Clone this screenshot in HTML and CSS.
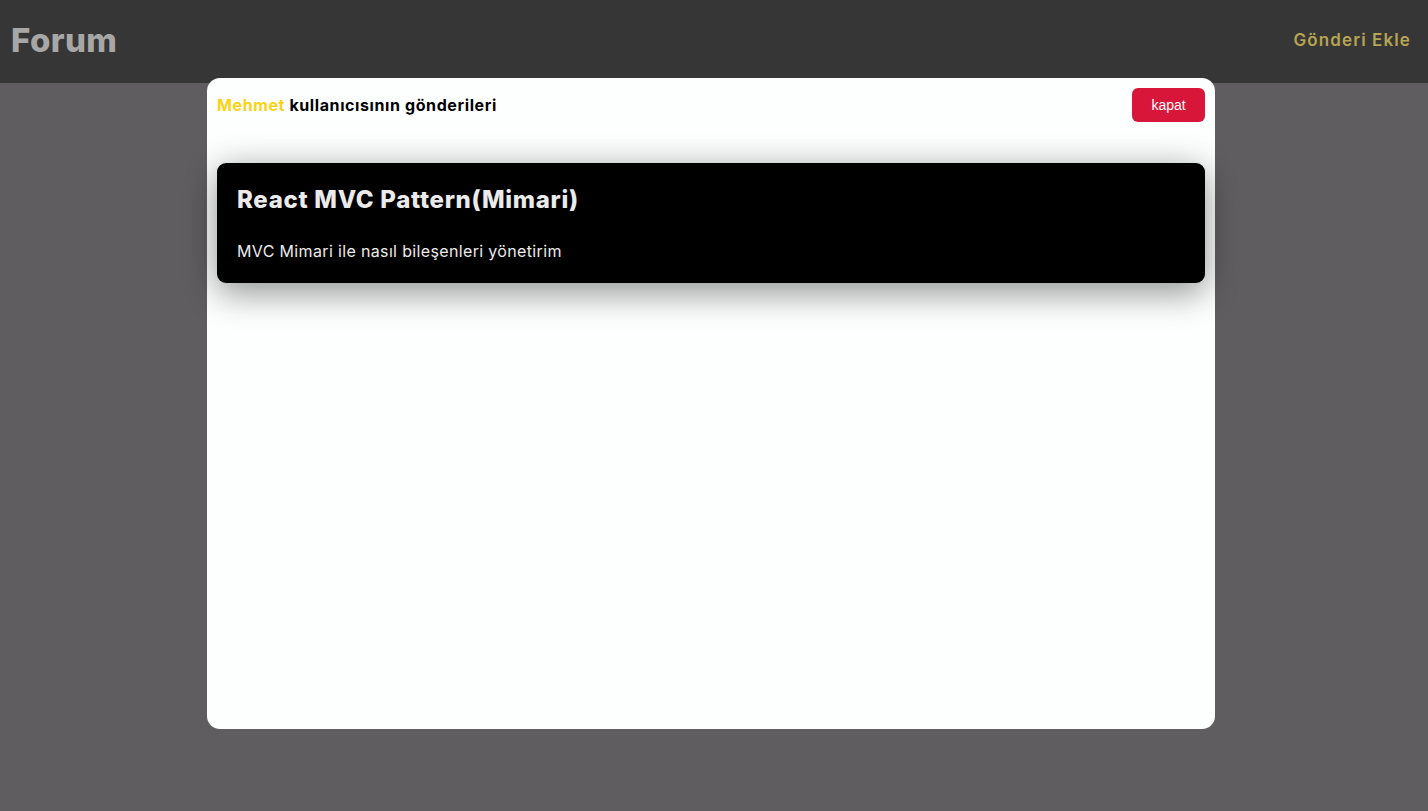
FILE: index.html
```html
<!DOCTYPE html>
<html lang="tr">
<head>
<meta charset="utf-8">
<title>Forum</title>
<link rel="stylesheet" href="styles.css">
</head>
<body>
<header class="topbar">
  <div class="brand">Forum</div>
  <a class="add-link" href="#">Gönderi Ekle</a>
</header>
<main class="page"></main>
<div class="backdrop">
  <section class="modal">
    <div class="modal-head">
      <h2 class="modal-title"><span class="user">Mehmet</span> kullanıcısının gönderileri</h2>
      <button class="close-btn">kapat</button>
    </div>
    <div class="posts">
      <article class="post">
        <h3 class="post-title">React MVC Pattern(Mimari)</h3>
        <p class="post-body">MVC Mimari ile nasıl bileşenleri yönetirim</p>
      </article>
    </div>
  </section>
</div>
</body>
</html>
```
FILE: styles.css
```css
* { box-sizing: border-box; }
html, body { margin: 0; padding: 0; }
body {
  font-family: "Inter", "Open Sans", sans-serif;
  background: #5f5d60;
  height: 811px;
  overflow: hidden;
}
.topbar {
  height: 83px;
  background: #363636;
  display: flex;
  align-items: center;
  justify-content: space-between;
  padding: 0 17px 4px 11px;
}
.brand {
  font-family: "Inter", sans-serif;
  font-weight: 800;
  font-size: 33px;
  color: #a7a7a7;
  letter-spacing: 0.4px;
}
.add-link {
  color: #b6a452;
  text-decoration: none;
  font-size: 17px;
  font-weight: 600;
  letter-spacing: 1.1px;
}
.backdrop {
  position: fixed;
  inset: 0;
  display: flex;
  justify-content: center;
  padding: 78px 6px 0 0;
}
.modal {
  width: 1008px;
  height: 651px;
  background: #fdfefe;
  border-radius: 13px;
  padding: 10px 10px;
  display: flex;
  flex-direction: column;
}
.modal-head {
  display: flex;
  justify-content: space-between;
  align-items: center;
  height: 34px;
}
.modal-title {
  margin: 0;
  font-size: 16px;
  font-weight: 700;
  color: #000;
  letter-spacing: 0.6px;
}
.user { color: #fbd215; }
.close-btn {
  width: 73px;
  height: 34px;
  background: #d8163a;
  color: #fff;
  border: none;
  border-radius: 6px;
  font-family: "Liberation Sans", Arial, sans-serif;
  font-size: 14px;
  cursor: pointer;
}
.posts {
  margin-top: 41px;
  display: flex;
  flex-direction: column;
}
.post {
  background: #000;
  border-radius: 9px;
  height: 120px;
  padding: 22px 20px;
  box-shadow: 0 12px 34px rgba(0, 0, 0, 0.33), 0 0 34px rgba(0, 0, 0, 0.15);
}
.post-title {
  margin: 0;
  color: #ebebeb;
  font-size: 24px;
  font-weight: 800;
  letter-spacing: 0.7px;
}
.post-body {
  margin: 27px 0 0;
  color: #ebebeb;
  font-size: 16px;
  font-weight: 400;
  letter-spacing: 0.35px;
}
```
